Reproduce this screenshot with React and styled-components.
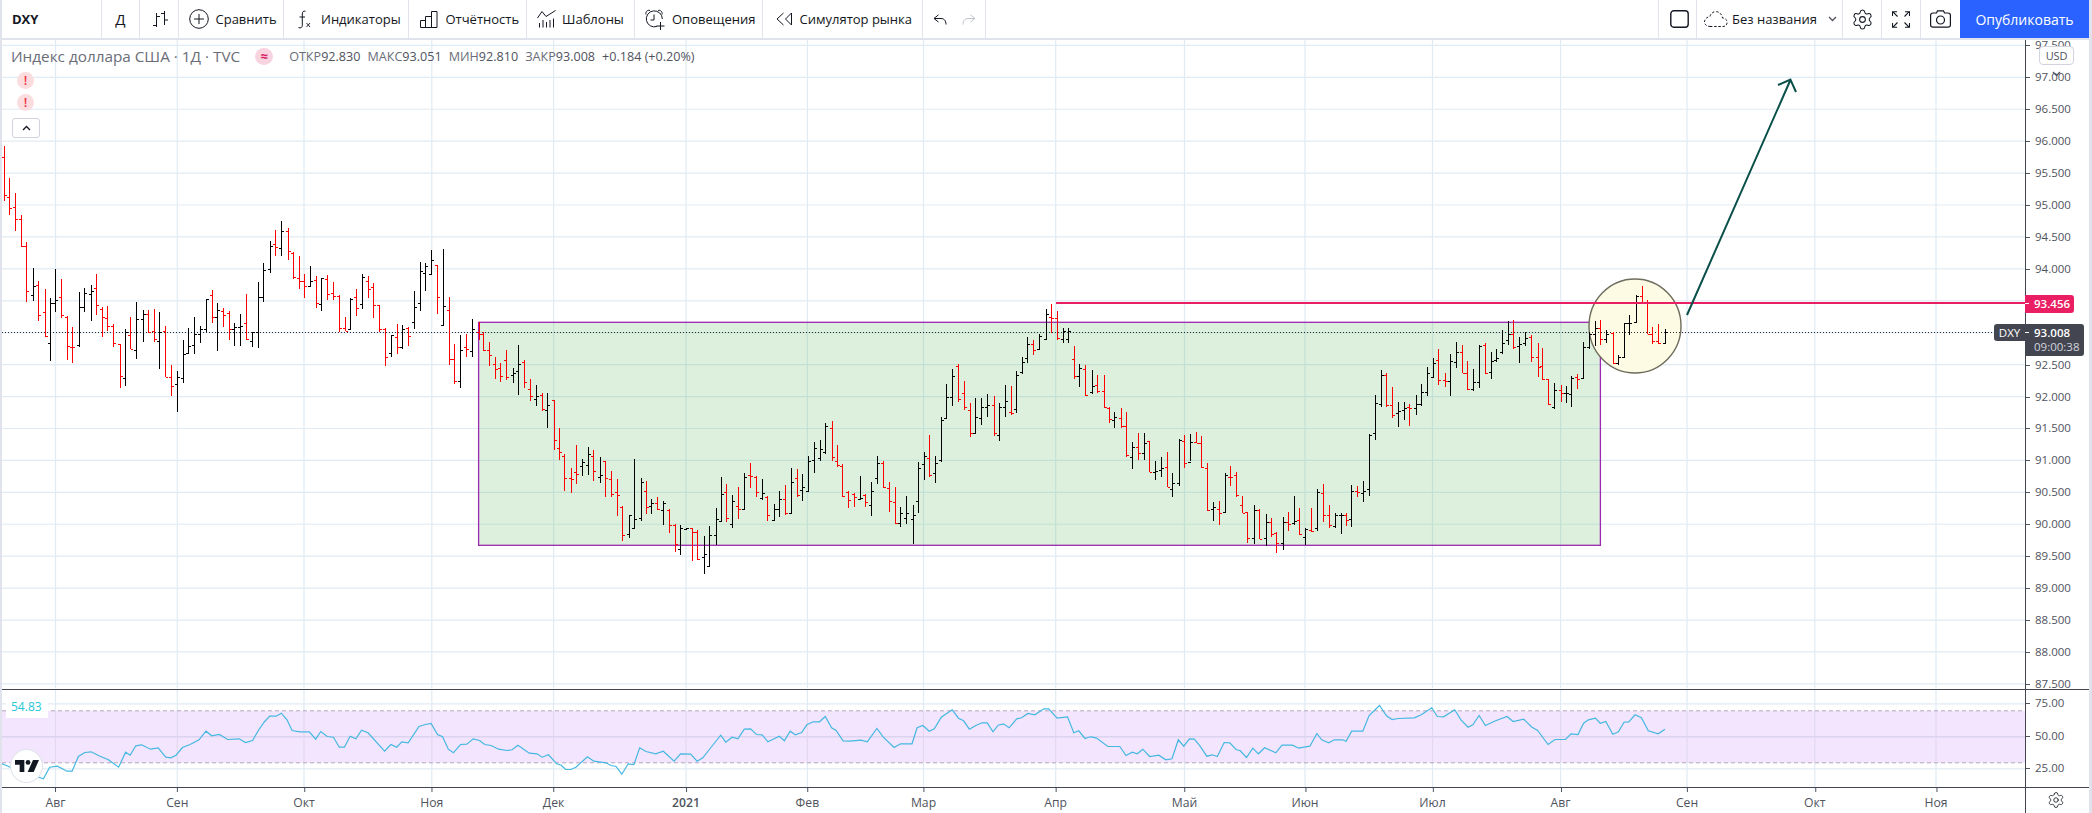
import React from "react";
import styled, { createGlobalStyle } from "styled-components";
import { Settings } from "lucide-react";

const Global = createGlobalStyle`
  html, body { margin: 0; padding: 0; background: #fff; }
  body { font-family: "Open Sans", "Liberation Sans", sans-serif; color: #131722; }
`;

const W = 2023;
const priceY = (p) => 77.3 + (97 - p) * 63.85;

/* bars digitised as [x, high, low, open, close] in three crops of the picture */
const A = [[8,48,212,82,196],[21,145,255,200,235],[34,190,302,230,268],[46,256,350,268,349],[59,337,515,349,484],[73,414,513,496,469],[86,454,572,464,556],[100,478,620,547,617],[111,505,692,640,520],[124,418,545,520,511],[137,447,563,502,556],[150,558,690,561,647],[162,590,698,650,652],[176,487,651,644,532],[189,475,547,532,490],[203,466,572,492,484],[216,433,554,475,526],[228,532,620,537,562],[240,528,602,565,589],[254,582,650,589,640],[268,642,773,643,739],[281,598,767,745,606],[292,561,658,616,657],[305,517,686,661,568],[320,541,636,568,553],[332,540,610,553,606],[344,537,635,604,628],[357,546,716,634,607],[369,588,742,604,742],[384,706,797,742,768],[397,724,845,763,740],[409,630,758,745,673],[422,595,671,670,649],[435,562,671,646,612],[449,587,640,612,598],[462,507,607,598,508],[474,480,580,495,562],[487,519,662,562,540],[500,535,592,544,556],[513,544,630,549,598],[525,580,648,598,592],[538,552,647,592,588],[551,492,630,580,626],[565,605,650,634,607],[578,456,653,607,501],[590,399,515,501,421],[604,334,428,418,349],[617,300,377,343,352],[630,273,378,355,303],[644,295,390,303,364],[656,365,446,370,440],[669,378,476,445,454],[682,432,503,454,468],[695,408,472,468,452],[708,438,533,451,520],[720,445,542,523,445],[733,435,510,448,491],[746,456,510,490,498],[759,495,606,497,595],[772,560,603,595,602],[785,504,600,598,507],[798,477,557,502,535],[811,433,537,523,440],[824,438,504,453,476],[836,460,564,470,526],[850,524,606,526,597],[863,594,708,598,682],[876,614,680,670,616],[889,582,671,622,650],[901,585,656,652,598],[914,590,648,595,619],[927,484,597,577,530],[940,396,542,520,424],[953,400,483,430,408],[966,360,433,432,391],[979,405,552,406,502],[992,357,587,586,529],[1005,502,705,540,688],[1018,642,762,688,754],[1031,615,773,754,661],[1044,612,680,652,657],[1058,567,680,664,598]];
const B = [[64,67,120,95,103],[75,97,152,103,151],[88,126,197,151,165],[100,171,236,193,208],[113,190,245,204,229],[126,150,240,181,232],[140,205,248,225,220],[153,135,285,214,193],[166,180,264,186,247],[179,237,302,268,289],[192,255,318,298,289],[205,280,332,285,327],[218,279,383,329,314],[232,300,450,301,421],[244,384,480,445,457],[256,462,572,467,535],[270,504,578,535,538],[282,435,552,517,522],[296,476,528,498,487],[309,441,525,495,463],[321,450,543,468,513],[335,471,550,531,525],[347,484,590,484,535],[361,513,590,538,583],[373,537,648,576,586],[386,619,722,620,706],[401,645,715,703,646],[413,478,688,685,658],[427,534,662,655,547],[438,543,642,574,620],[451,597,642,618,610],[464,591,630,610,628],[478,602,675,630,608],[491,628,698,630,674],[504,672,755,676,733],[516,676,765,748,685],[529,685,686,686,685],[542,683,782,685,695],[554,690,780,697,778],[568,708,822,772,762],[580,678,800,798,706],[595,625,735,706,656],[607,532,662,662,582],[619,552,665,575,655],[632,586,685,672,603],[646,561,656,618,628],[659,520,628,628,532],[673,490,565,525,527],[686,528,592,530,577],[698,537,600,595,580],[711,588,662,590,646],[725,613,660,660,628],[738,574,652,628,598],[751,555,645,598,640],[764,505,640,640,547],[777,506,592,535,585],[789,522,602,570,560],[802,468,574,573,484],[815,427,518,481,443],[828,420,482,473,447],[841,370,462,455,378],[855,363,482,385,472],[867,435,500,482,495],[879,492,590,497,589],[892,572,623,576,600],[905,578,620,582,592],[919,528,597,596,593],[930,582,620,586,606],[944,546,647,616,574],[957,468,551,535,490],[970,484,565,490,560],[983,546,636,563,604],[996,561,672,606,670],[1009,622,680,668,640],[1022,588,672,653,640],[1036,615,732,658,646],[1048,486,640,604,505],[1061,455,540,493,468],[1074,405,530,474,525],[1087,468,548,520,490],[1100,352,485,480,360],[1112,252,355,355,292],[1125,207,318,292,229],[1138,192,305,197,297],[1151,243,330,278,322],[1164,310,410,330,400],[1177,294,400,400,350],[1190,295,375,355,322],[1203,282,350,322,316],[1218,288,408,316,398],[1229,310,422,406,322],[1243,255,352,322,304],[1256,258,345,337,340],[1268,213,340,328,226],[1281,172,222,216,186],[1293,112,190,174,133],[1306,120,165,133,149],[1319,103,150,148,107],[1334,27,118,116,42],[1347,13,100,52,53],[1359,33,120,55,113],[1372,85,128,118,93],[1385,85,128,118,92],[1397,138,237,178,228],[1410,192,262,229,203],[1423,195,288,208,285],[1437,210,282,275,258],[1449,225,280,254,274],[1464,225,325,274,322],[1476,322,370,324,358],[1488,337,385,360,352],[1502,324,385,355,378],[1515,337,470,379,466],[1528,427,507,472,442],[1541,400,480,442,460],[1554,400,480,460,428]];
const C = [[334,483,575,484,575],[347,543,600,575,573],[360,530,590,570,563],[373,517,622,560,620],[386,580,651,627,610],[400,478,618,610,480],[413,465,565,483,548],[425,462,542,545,487],[438,456,490,486,490],[451,468,565,490,562],[464,550,693,565,690],[477,665,722,688,680],[490,663,735,686,700],[503,580,698,695,585],[516,558,617,590,592],[528,576,650,584,645],[541,647,700,675,698],[554,695,790,697,775],[568,675,792,775,690],[581,688,778,690,778],[595,703,797,775,727],[606,715,772,727,763],[618,757,819,760,790],[633,712,810,790,725],[646,697,752,725,732],[659,648,735,730,722],[670,685,765,720,762],[684,745,795,770,748],[697,685,757,750,752],[711,628,752,745,635],[724,612,725,640,706],[737,675,745,706,735],[750,700,745,738,706],[763,700,762,706,706],[776,700,738,706,720],[787,615,740,718,633],[800,617,650,633,637],[813,603,665,640,632],[827,463,648,628,465],[840,345,480,460,368],[853,270,380,372,285],[865,278,380,285,375],[879,322,415,375,405],[892,367,440,400,392],[905,367,420,390,385],[917,372,438,382,385],[931,345,405,385,373],[944,312,378,372,335],[957,262,348,335,280],[970,235,292,290,248],[982,207,315,240,300],[996,280,322,300,304],[1009,222,348,303,243],[1022,186,265,245,215],[1034,195,280,215,280],[1047,243,330,280,328],[1060,267,332,328,305],[1073,195,325,305,197],[1087,190,282,195,280],[1099,215,296,277,243],[1112,207,245,240,235],[1125,150,222,215,188],[1138,123,195,180,162],[1150,120,207,162,200],[1163,172,250,198,193],[1177,155,197,190,175],[1190,165,245,170,230],[1204,190,290,230,260],[1215,205,300,258,298],[1228,298,375,298,373],[1242,310,388,380,330],[1256,316,365,330,340],[1268,318,368,338,338],[1280,288,382,342,293],[1293,283,326,290,296],[1306,187,295,295,200],[1319,155,208,200,163],[1333,123,197,163,145],[1345,120,195,145,178],[1358,150,188,178,163],[1372,155,252,160,250],[1385,225,255,250,230],[1397,128,232,230,130],[1410,105,165,130,128],[1424,45,127,127,47],[1437,17,70,47,68],[1450,60,163,68,162],[1461,140,193,163,182],[1475,132,193,182,190],[1489,148,190,190,155]];

const conv = (rows, x0, y0) => rows.map(([x, h, l, o, c]) => ({
  x: Math.round(x0 + x / 2.24) + 0.5,
  h: y0 + h / 3, l: y0 + l / 3, o: Math.round(y0 + o / 3) + 0.5, c: Math.round(y0 + c / 3) + 0.5,
  red: c > o,
}));
const bars = [...conv(A, 0, 130), ...conv(B, 450, 300), ...conv(C, 1000, 280)];
const barPath = (red) => bars.filter((b) => b.red === red)
  .map((b) => `M${b.x - 2.5} ${b.o}H${b.x}M${b.x} ${b.c}H${b.x + 2.5}`).join("");
const stemPath = (red) => bars.filter((b) => b.red === red)
  .map((b) => `M${b.x} ${b.h.toFixed(1)}V${b.l.toFixed(1)}`).join("");

const rsi7 = [[0,278],[13,287],[25,300],[57,318],[68,325],[78,290],[90,287],[105,302],[113,302],[123,258],[133,246],[143,244],[155,256],[170,268],[186,290],[197,245],[204,254],[213,226],[222,223],[236,236],[248,232],[260,260],[268,262],[276,254],[286,231],[298,222],[312,208],[323,182],[332,196],[344,192],[357,207],[375,205],[385,216],[396,210],[405,180],[415,153],[423,137],[433,137],[441,128],[450,148],[458,180],[470,184],[485,184],[495,206],[503,183],[513,198],[523,200],[532,230],[540,230],[549,197],[558,205],[567,179],[577,187],[603,242],[613,222],[622,230],[630,214],[640,217],[657,168],[667,162],[676,159],[686,192],[694,199],[703,236],[711,247],[722,222],[732,221],[742,205],[752,210],[760,222],[770,225],[782,236],[795,240],[803,238],[812,224],[830,248],[842,250],[850,260],[860,253],[873,280],[880,284],[887,297],[895,297],[903,290],[921,259],[931,272],[950,277],[958,285],[966,288],[975,311],[985,280],[994,282],[1003,232],[1013,243],[1028,250],[1040,242],[1057,272],[1067,250],[1083,251],[1093,272],[1102,262],[1116,228],[1130,194],[1138,215],[1148,200],[1157,205],[1167,176],[1177,175],[1186,192],[1195,193],[1204,214],[1222,197],[1230,211],[1239,182],[1247,193],[1257,186],[1265,163],[1275,154],[1285,154],[1294,138],[1304,172],[1311,180],[1322,211],[1332,212],[1350,209],[1360,214],[1375,174],[1385,200],[1402,231],[1412,220],[1430,220],[1438,172],[1447,165],[1457,182],[1465,175],[1476,140],[1484,130],[1493,118],[1503,143],[1511,151],[1520,176],[1530,165],[1540,157],[1548,157],[1557,184],[1565,164]];
const rsi8 = [[5,160],[13,172],[24,145],[31,142],[40,129],[50,133],[63,115],[70,115],[82,143],[97,139],[106,187],[113,181],[122,204],[130,199],[138,202],[155,228],[172,228],[181,255],[190,245],[197,250],[205,236],[215,258],[228,254],[238,268],[247,265],[256,208],[264,227],[272,205],[279,206],[287,226],[297,257],[305,253],[312,258],[322,216],[330,217],[339,237],[345,241],[354,261],[363,233],[371,250],[380,232],[396,247],[405,224],[420,224],[429,233],[445,227],[455,189],[462,208],[472,217],[480,208],[492,208],[497,212],[505,182],[521,182],[530,135],[545,105],[555,136],[563,147],[572,144],[595,142],[605,133],[620,112],[628,138],[637,139],[653,118],[662,148],[672,170],[679,163],[688,135],[697,165],[710,152],[728,138],[737,153],[752,146],[764,170],[772,180],[787,222],[797,207],[812,207],[820,190],[830,192],[838,158],[845,148],[855,143],[862,158],[870,153],[880,191],[888,184],[896,155],[903,154],[912,133],[921,142],[931,181],[945,190],[955,176]];
const rsiPoints = [
  ...rsi7.map(([x, y]) => `${(x / 1.568).toFixed(1)},${(670 + y / 3).toFixed(1)}`),
  ...rsi8.map(([x, y]) => `${(1000 + x / 1.436).toFixed(1)},${(670 + y / 3).toFixed(1)}`),
].join(" ");

const months = [["Авг",55.5],["Сен",177.3],["Окт",304],["Ноя",431.8],["Дек",553.6],["2021",686,true],["Фев",807.4],["Мар",923.5],["Апр",1055.7],["Май",1184.5],["Июн",1305],["Июл",1432.5],["Авг",1560.6],["Сен",1687],["Окт",1814.8],["Ноя",1936]];
const priceLevels = [];
for (let p = 97.5; p >= 87.5; p -= 0.5) priceLevels.push(p);
const hiddenLevels = [93.5, 93];

const Page = styled.div`
  width: 2092px; height: 813px; box-sizing: border-box; padding: 0 3px 0 2px;
  background: #e0e3eb; display: flex; flex-direction: column; overflow: hidden;
`;
const Toolbar = styled.header`
  height: 38px; flex: none; margin-bottom: 2px; background: #fff; display: flex; align-items: stretch;
`;
const Group = styled.div`
  width: ${(p) => p.$w}px; box-sizing: border-box; flex: none; display: flex; align-items: center;
  padding-left: ${(p) => p.$pad || 0}px; gap: ${(p) => p.$gap || 0}px;
  border-right: ${(p) => (p.$plain ? "none" : "1.5px solid #e0e3eb")};
  border-left: ${(p) => (p.$start ? "1.5px solid #e0e3eb" : "none")};
  justify-content: ${(p) => (p.$center ? "center" : "flex-start")};
  font-size: 13px; line-height: 1; color: #131722; white-space: nowrap;
`;
const Symbol = styled.span` font-weight: 700; font-size: 13px; `;
const Interval = styled.span` font-size: 15px; `;
const Spacer = styled.div` flex: 1; `;
const Publish = styled.button`
  width: 129px; flex: none; border: 0; padding: 0; background: #2962ff; color: #fff;
  font: 400 14px "Open Sans", sans-serif;
`;
const Caret = styled.span` margin-left: 7px; display: flex; `;
const Icon = styled.svg`
  flex: none; fill: none; stroke: ${(p) => p.$color || "#131722"}; stroke-width: ${(p) => p.$sw || 1}px;
`;

const Pane = styled.section`
  flex: none; height: ${(p) => p.$h}px; display: flex; background: #fff; overflow: hidden;
  border-bottom: 1.5px solid #434651; box-sizing: border-box;
`;
const Canvas = styled.div` width: ${W}px; flex: none; position: relative; `;
const Drawing = styled.svg` display: block; `;
const PriceAxis = styled.div`
  flex: 1; position: relative; background: #fff; border-left: 1.5px solid #434651; box-sizing: border-box;
`;
const PriceTick = styled.div`
  position: absolute; left: 0; transform: translateY(-50%);
  font-size: 11.5px; line-height: 14px; color: #50535e; padding-left: 9px;
  &::before { content: ""; position: absolute; left: 0; top: 7px; width: 4px; height: 1px; background: #50535e; }
`;
const PriceTag = styled.div`
  position: absolute; left: -1px; top: ${(p) => p.$top}px; background: ${(p) => p.$bg}; color: #fff; padding: 2px 4px 2px 9px;
  border-radius: 0 3px 3px 0; font-size: 11.5px; line-height: 14px; font-weight: 600;
  &::before { content: ""; position: absolute; left: 0; top: 8px; width: 4px; height: 1px; background: #fff; }
`;
const TagSub = styled.div` font-weight: 400; color: #d1d4dc; `;
const SymbolTag = styled.div`
  position: absolute; right: 0; top: 284px; width: 31px; height: 17px; box-sizing: border-box;
  background: #434651; color: #fff; font-size: 11.5px; line-height: 17px; text-align: center; border-radius: 3px 0 0 3px;
`;
const CurrencyButton = styled.div`
  position: absolute; left: 13px; top: 6px; width: 35px; height: 19px; box-sizing: border-box;
  background: #fff; border: 1px solid #d1d4dc; border-radius: 4px; font-size: 11px; line-height: 17px; color: #50535e;
  text-align: center; letter-spacing: -0.2px;
`;
const Legend = styled.div`
  position: absolute; left: 9px; top: 7px; display: flex; flex-direction: column; align-items: flex-start;
`;
const LegendRow = styled.div` display: flex; align-items: center; height: 18px; white-space: nowrap; `;
const Title = styled.span` font-size: 15.3px; color: #6a6d78; `;
const LiveBadge = styled.span`
  width: 18px; height: 17px; margin-left: 15px; margin-right: 16px; border-radius: 50%; background: #f8d3e0;
  color: #d81b60; font-size: 13px; font-weight: 700; line-height: 16px; text-align: center;
`;
const Ohlc = styled.span`
  font-size: 12.6px; color: #6a6d78; margin-right: 7px;
  b { font-weight: 400; color: #50535e; }
`;
const Change = styled.span` font-size: 12.6px; color: #50535e; `;
const Warning = styled.div`
  width: 17px; height: 17px; margin: ${(p) => p.$top}px 0 0 6px; border-radius: 50%; background: #fbdde0;
  color: #f23645; font-size: 13px; line-height: 17px; font-weight: 600; text-align: center;
`;
const CollapseButton = styled.div`
  width: 28px; height: 20px; margin: 7px 0 0 1px; box-sizing: border-box; background: #fff;
  border: 1px solid #d1d4dc; border-radius: 3px; display: flex; align-items: center; justify-content: center;
`;
const RsiValue = styled.div`
  position: absolute; left: 4px; top: 13px; width: 42px; height: 15px; background: #fff;
  font-size: 12px; line-height: 7px; color: #26c6da; padding-left: 5px; box-sizing: border-box;
`;
const LogoBadge = styled.div`
  position: absolute; left: 8px; top: 59px; width: 33px; height: 34px; border-radius: 50%; background: #fff;
  border: 1px solid #e0e3eb; box-sizing: border-box; display: flex; align-items: center; justify-content: center;
`;
const TimeAxis = styled.footer` flex: 1; display: flex; background: #fff; `;
const TimeScale = styled.div` width: ${W}px; flex: none; position: relative; `;
const TimeLabel = styled.div`
  position: absolute; top: 7px; transform: translateX(-50%); font-size: 12.2px; line-height: 16px; color: #50535e;
  font-weight: ${(p) => (p.$strong ? 600 : 400)};
  &::before { content: ""; position: absolute; left: 50%; top: -7px; width: 1px; height: 4px; background: #50535e; }
`;
const TimeCorner = styled.div`
  flex: 1; border-left: 1.5px solid #434651; display: flex; align-items: center; justify-content: center; padding-right: 4px;
`;

const gridX = months.map((m) => m[1]);

const Grid = ({ y0, y1, levels }) => (
  <g stroke="#e0ebf3" strokeWidth="1.2">
    {gridX.map((x) => <line key={x} x1={x} x2={x} y1={y0} y2={y1} />)}
    {levels.map((y) => <line key={y} x1="0" x2="2025" y1={y} y2={y} />)}
  </g>
);

const MainChart = () => (
  <Drawing width={W} height="648" viewBox={`2 40 ${W} 648`}>
    <Grid y0={40} y1={688} levels={priceLevels.map(priceY)} />
    <rect x="478.6" y="322.3" width="1121.8" height="223" fill="rgba(76,175,80,0.19)" stroke="#9c27b0" strokeWidth="1.3" />
    <ellipse cx="1635" cy="326" rx="46" ry="47" fill="#fefbe4" stroke="#6e6c5c" strokeWidth="1.4" />
    <line x1="2" x2="2025" y1="332.5" y2="332.5" stroke="#2a2e39" strokeWidth="1" strokeDasharray="1 2" />
    <path d={stemPath(true) + barPath(true)} stroke="#ff0000" strokeWidth="1" fill="none" shapeRendering="crispEdges" />
    <path d={stemPath(false) + barPath(false)} stroke="#000" strokeWidth="1" fill="none" shapeRendering="crispEdges" />
    <line x1="1056" x2="2025" y1="303" y2="303" stroke="#e91e63" strokeWidth="2" />
    <path d="M1687 315L1790.4 80M1778 85L1790.4 79.5L1796 92" fill="none" stroke="#0b4f4a" strokeWidth="2" />
  </Drawing>
);

const RsiChart = () => (
  <Drawing width={W} height="98" viewBox={`2 689.5 ${W} 98`}>
    <Grid y0={689} y1={787} levels={[703.3, 768.3]} />
    <rect x="2" y="710.3" width={W} height="52" fill="#f3e5fd" />
    {gridX.map((x) => <line key={x} x1={x} x2={x} y1="710.3" y2="762.3" stroke="#e2d9ef" strokeWidth="1.2" />)}
    <line x1="2" x2="2025" y1="736.3" y2="736.3" stroke="#dcd3f0" strokeWidth="1.4" />
    <line x1="2" x2="2025" y1="710.3" y2="710.3" stroke="#b6a6bd" strokeDasharray="4 3" />
    <line x1="2" x2="2025" y1="762.3" y2="762.3" stroke="#b6a6bd" strokeDasharray="4 3" />
    <polyline points={rsiPoints} fill="none" stroke="#45b8e2" strokeWidth="1.2" />
  </Drawing>
);

const Chevron = ({ up }) => (
  <Icon width="9" height="6" viewBox="0 0 9 6" $sw={1.3} $color={up ? "#131722" : "#50535e"}>
    <path d={up ? "M1 5L4.5 1.5L8 5" : "M1 1L4.5 4.5L8 1"} />
  </Icon>
);

export default function App() {
  return (
    <Page>
      <Global />
      <Toolbar>
        <Group $w={100} $pad={10}><Symbol>DXY</Symbol></Group>
        <Group $w={38} $center><Interval>Д</Interval></Group>
        <Group $w={39} $pad={12}>
          <Icon width="17" height="18" viewBox="0 0 17 18">
            <path d="M4.5 3V17M1 15.5H4.5M4.5 6.5H8M12.5 1V15M9 3.5H12.5M12.5 10H16" />
          </Icon>
        </Group>
        <Group $w={105} $pad={9.5} $gap={7}>
          <Icon width="20" height="20" viewBox="0 0 20 20"><circle cx="10" cy="10" r="9.3" /><path d="M10 5V15M5 10H15" /></Icon>
          <span>Сравнить</span>
        </Group>
        <Group $w={125} $pad={13} $gap={10}>
          <Icon width="14" height="19" viewBox="0 0 14 19">
            <path d="M8.5 1.2C6.3 0.6 5.4 2 5.3 4V15.5C5.2 17.6 3.8 18.4 1.5 17.6M2.5 7H8" />
            <path d="M9.5 13L13 17M13 13L9.5 17" strokeWidth="0.9" />
          </Icon>
          <span>Индикаторы</span>
        </Group>
        <Group $w={118} $pad={10.5} $gap={8}>
          <Icon width="18" height="17" viewBox="0 0 18 17">
            <path d="M0.5 16.5V9.5H5.5V16.5M5.5 16.5V5.5H11.5V16.5M11.5 16.5V0.5H17V16.5H0.5" />
          </Icon>
          <span>Отчётность</span>
        </Group>
        <Group $w={108} $pad={10} $gap={6}>
          <Icon width="19" height="18" viewBox="0 0 19 18">
            <path d="M0.5 8L5 1.5L9 6.5L13 4L18.5 0.5" />
            <path d="M2.5 13V17.5M6 10V17.5M9.5 12V17.5M13 10V17.5M16.5 8.5V17.5" />
          </Icon>
          <span>Шаблоны</span>
        </Group>
        <Group $w={128} $pad={10} $gap={6}>
          <Icon width="21" height="21" viewBox="0 0 21 21">
            <path d="M12 17.4A8 8 0 1 1 17.3 10" />
            <path d="M9 5.5V11H5.5M1 5.5C0.2 3 2.5 0.5 5 1.5M13 1.5C15.5 0.5 17.8 3 17 5.5" />
            <path d="M15.5 13V21M11.5 17H19.5" />
          </Icon>
          <span>Оповещения</span>
        </Group>
        <Group $w={160} $pad={12.5} $gap={7}>
          <Icon width="17" height="14" viewBox="0 0 17 14">
            <path d="M7.5 1L1 7L7.5 13M15.5 1L9.5 7L15.5 13V1" />
          </Icon>
          <span>Симулятор рынка</span>
        </Group>
        <Group $w={63} $pad={10} $gap={15}>
          <Icon width="14" height="11" viewBox="0 0 14 11"><path d="M5.5 0.8L1 4.5L5.5 8M1.2 4.5H8C11 4.5 13 6.5 13 10.5" /></Icon>
          <Icon width="14" height="11" viewBox="0 0 14 11" $color="#c1c4cd"><path d="M8.5 0.8L13 4.5L8.5 8M12.8 4.5H6C3 4.5 1 6.5 1 10.5" /></Icon>
        </Group>
        <Spacer />
        <Group $w={39} $pad={10.5} $start>
          <Icon width="19" height="18" viewBox="0 0 19 18" $sw={1.4}><rect x="0.8" y="0.8" width="17.4" height="16.4" rx="3" /></Icon>
        </Group>
        <Group $w={146} $pad={7} $gap={4}>
          <Icon width="24" height="16" viewBox="0 0 24 16" strokeDasharray="2.4 1.8">
            <path d="M6 15.5H19C22 15.5 23.5 13 23 10.5C22.7 8.5 21 7 18.5 7C18 3 15 0.7 12 0.7C8.5 0.7 6.5 3 6 5.5C2.5 6 0.5 8.5 0.5 11C0.5 13.5 3 15.5 6 15.5Z" />
          </Icon>
          <span>Без названия</span>
          <Caret><Chevron /></Caret>
        </Group>
        <Group $w={39} $center><Settings size={23} strokeWidth={1.1} color="#131722" /></Group>
        <Group $w={39} $center>
          <Icon width="18" height="17" viewBox="0 0 18 17" $sw={1.1}>
            <path d="M0.5 5V0.7H5M0.7 0.7L5.5 5.5M13 0.7H17.5V5M17.3 0.7L12.5 5.5M0.5 12V16.3H5M0.7 16.3L5.5 11.5M13 16.3H17.5V12M17.3 16.3L12.5 11.5" />
          </Icon>
        </Group>
        <Group $w={39} $center $plain>
          <Icon width="21" height="18" viewBox="0 0 21 18" $sw={1.2}>
            <path d="M6.5 3L7.5 0.8H13.5L14.5 3H18C19.5 3 20.4 4 20.4 5.2V15C20.4 16.4 19.5 17.2 18 17.2H3C1.5 17.2 0.6 16.4 0.6 15V5.2C0.6 4 1.5 3 3 3Z" />
            <circle cx="10.5" cy="10" r="4" />
          </Icon>
        </Group>
        <Publish>Опубликовать</Publish>
      </Toolbar>

      <Pane $h={649.5}>
        <Canvas>
          <MainChart />
          <Legend>
            <LegendRow>
              <Title>Индекс доллара США · 1Д · TVC</Title>
              <LiveBadge>≈</LiveBadge>
              <Ohlc>ОТКР<b>92.830</b></Ohlc>
              <Ohlc>МАКС<b>93.051</b></Ohlc>
              <Ohlc>МИН<b>92.810</b></Ohlc>
              <Ohlc>ЗАКР<b>93.008</b></Ohlc>
              <Change>+0.184 (+0.20%)</Change>
            </LegendRow>
            <Warning $top={7}>!</Warning>
            <Warning $top={5}>!</Warning>
            <CollapseButton><Chevron up /></CollapseButton>
          </Legend>
          <SymbolTag>DXY</SymbolTag>
        </Canvas>
        <PriceAxis>
          {priceLevels.filter((p) => !hiddenLevels.includes(p)).map((p) => (
            <PriceTick key={p} style={{ top: `${priceY(p) - 40}px` }}>{p.toFixed(3)}</PriceTick>
          ))}
          <CurrencyButton>USD <Chevron /></CurrencyButton>
          <PriceTag $bg="#e91e63" $top={255}>93.456</PriceTag>
          <PriceTag $bg="#434651" $top={284}>
            93.008
            <TagSub>09:00:38</TagSub>
          </PriceTag>
        </PriceAxis>
      </Pane>

      <Pane $h={98}>
        <Canvas>
          <RsiChart />
          <RsiValue>54.83</RsiValue>
          <LogoBadge>
            <svg width="24" height="12" viewBox="0 0 36 18" fill="#131722">
              <path d="M0 0H14V18H7V7H0Z" />
              <circle cx="19.5" cy="3.6" r="3.6" />
              <path d="M27 0H36L28 18H19Z" />
            </svg>
          </LogoBadge>
        </Canvas>
        <PriceAxis>
          <PriceTick style={{ top: "13.5px" }}>75.00</PriceTick>
          <PriceTick style={{ top: "46.5px" }}>50.00</PriceTick>
          <PriceTick style={{ top: "78.5px" }}>25.00</PriceTick>
        </PriceAxis>
      </Pane>

      <TimeAxis>
        <TimeScale>
          {months.map(([label, x, strong]) => (
            <TimeLabel key={x} $strong={strong} style={{ left: `${x - 2}px` }}>{label}</TimeLabel>
          ))}
        </TimeScale>
        <TimeCorner><Settings size={18} strokeWidth={1.1} color="#131722" /></TimeCorner>
      </TimeAxis>
    </Page>
  );
}
